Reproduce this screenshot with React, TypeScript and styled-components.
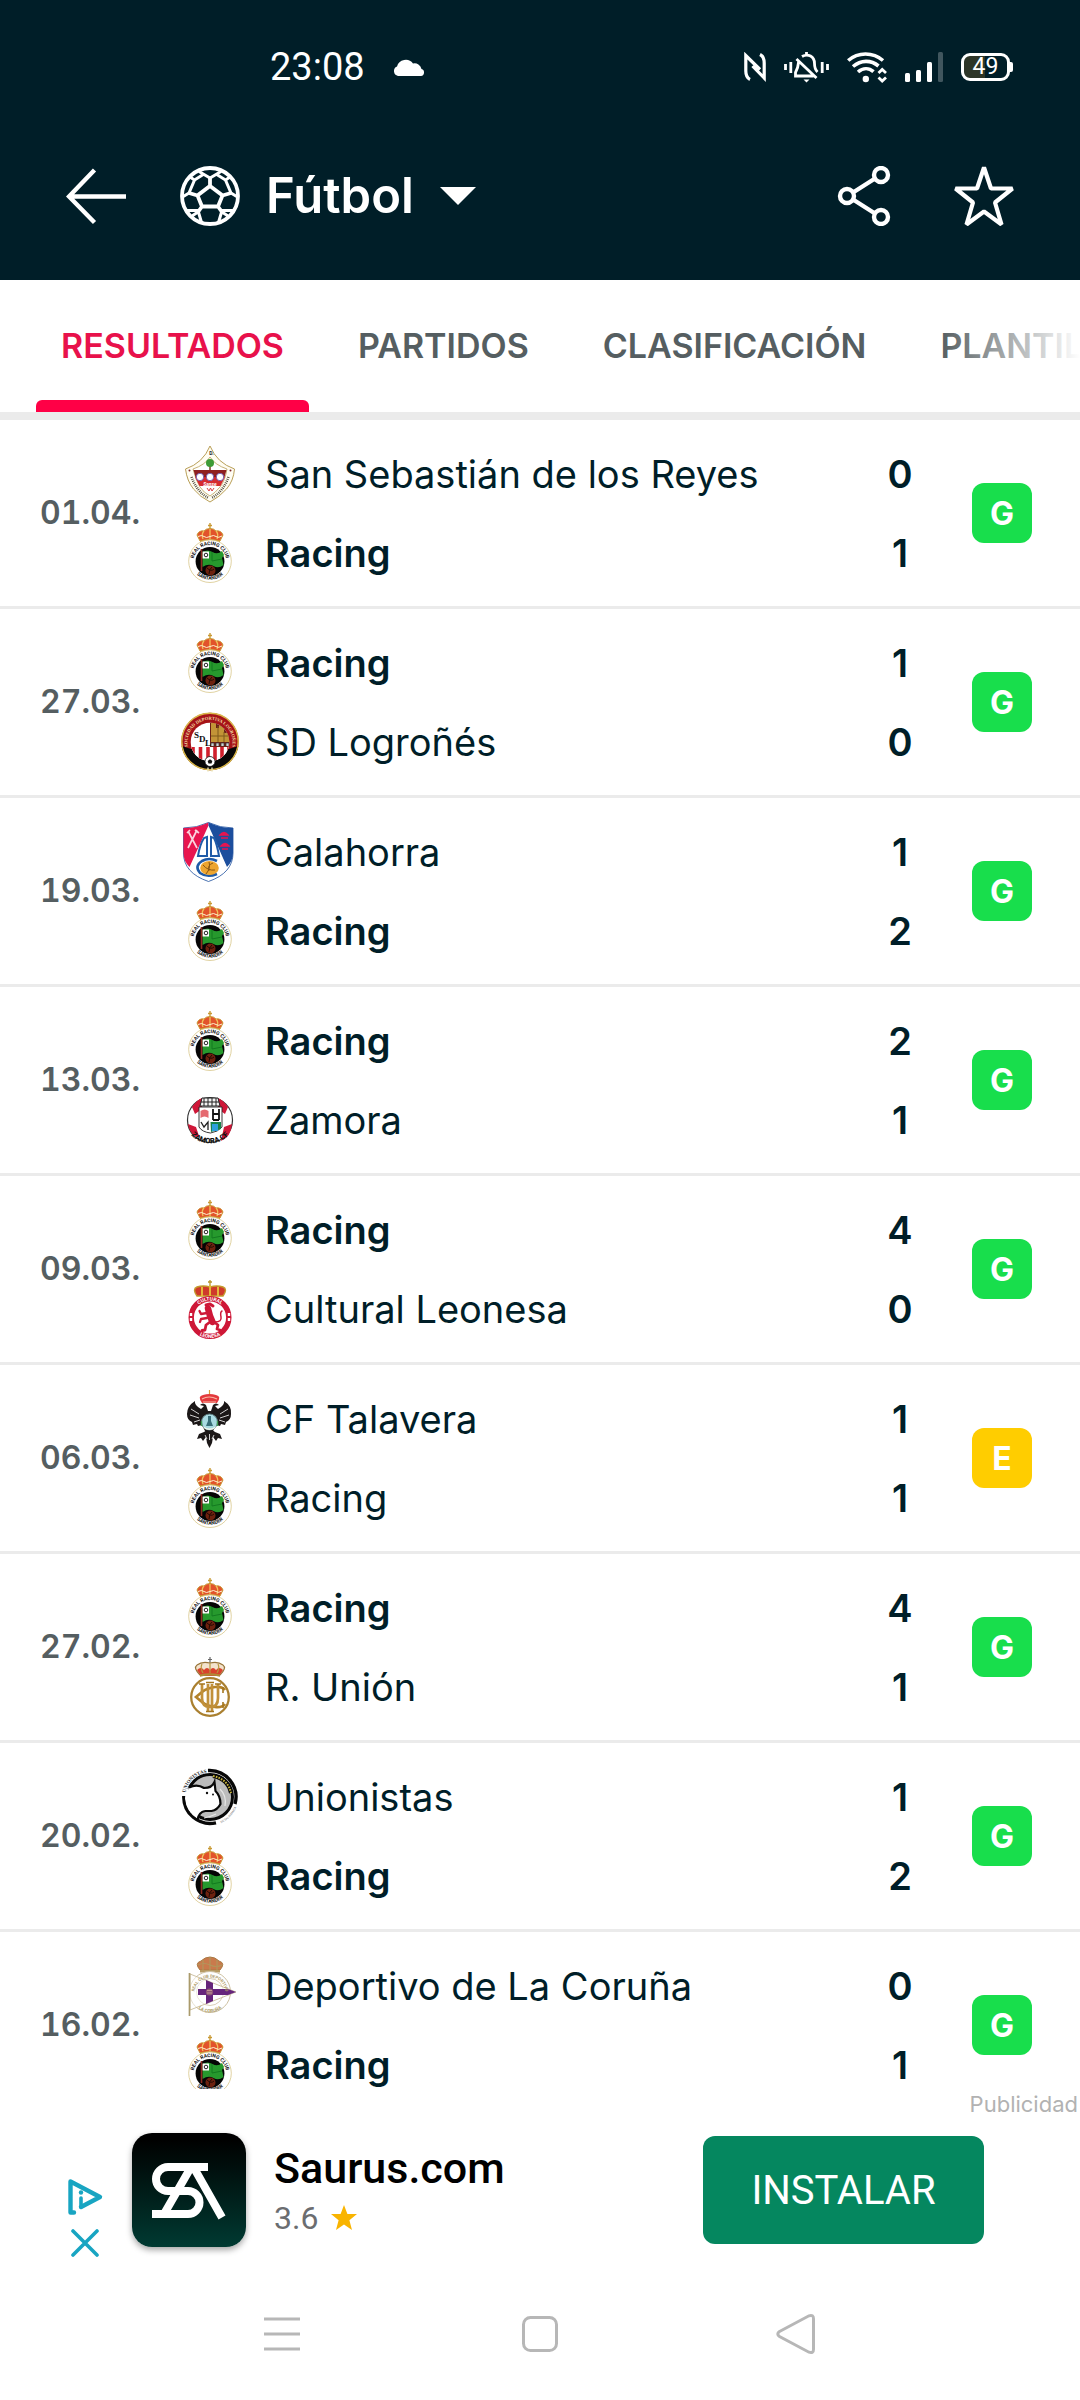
import React from "react";
import styled, { createGlobalStyle } from "styled-components";

const SANS = `Inter, Roboto, "Liberation Sans", sans-serif`;
const DEVICE = `Roboto, "Open Sans", "Liberation Sans", sans-serif`;

const GlobalStyle = createGlobalStyle`
  *, *::before, *::after { box-sizing: border-box; }
  body { margin: 0; background: #fff; color: #001e28; font-family: ${SANS}; }
  button, select { margin: 0; padding: 0; border: 0; background: none; color: inherit; font: inherit; }
  svg { display: block; flex: none; }
`;

const Page = styled.div`
  display: flex;
  flex-direction: column;
  height: 100vh;
  background: #fff;
`;

const Header = styled.header`
  flex: none;
  background: #001e28;
  color: #fff;
`;

const StatusBar = styled.div`
  display: flex;
  align-items: center;
  justify-content: space-between;
  height: 112px;
  padding: 22px 70px 0 270px;
  font-family: ${DEVICE};
`;

const StatusGroup = styled.div<{ $gap: number }>`
  display: flex;
  align-items: center;
  gap: ${(p) => p.$gap}px;
`;

const Clock = styled.time`
  font-size: 38px;
  line-height: 44px;
`;

const Battery = styled.div`
  position: relative;
  display: flex;
  align-items: center;
  justify-content: center;
  width: 49px;
  height: 28px;
  border: 3px solid #fff;
  border-radius: 9px;
  background: linear-gradient(to right, #2d3527 50%, transparent 50%);
  font-size: 23px;
  line-height: 22px;

  &::after {
    content: "";
    position: absolute;
    right: -6px;
    top: 6px;
    width: 3px;
    height: 10px;
    border-radius: 0 2px 2px 0;
    background: #fff;
  }
`;

const Toolbar = styled.div`
  display: flex;
  align-items: center;
  height: 168px;
  padding: 0 66px;
`;

const IconButton = styled.button`
  display: flex;
  align-items: center;
  justify-content: center;
  width: 60px;
  height: 60px;
`;

const SportPicker = styled.label`
  display: flex;
  align-items: center;
  gap: 26px;
  margin-left: 54px;
`;

const SportSelect = styled.select`
  appearance: none;
  outline: none;
  font-size: 49px;
  font-weight: 600;
  line-height: 60px;
`;

const Actions = styled.div`
  display: flex;
  gap: 60px;
  margin-left: auto;
`;

const Tabs = styled.nav`
  display: flex;
  flex: none;
  gap: 24px;
  height: 140px;
  padding: 0 36px;
  border-bottom: 8px solid #ebebeb;
  overflow: hidden;
`;

const TabStrip = styled.div`
  position: relative;
  flex: none;

  &::after {
    content: "";
    position: absolute;
    top: 0;
    right: 0;
    width: 140px;
    height: 132px;
    background: linear-gradient(to right, rgba(255, 255, 255, 0), #fff);
    pointer-events: none;
  }
`;

const Tab = styled.a<{ $active?: boolean }>`
  display: flex;
  flex: none;
  flex-direction: column;
  justify-content: space-between;
  padding: 46px 25px 0;
  color: ${(p) => (p.$active ? "#e8114b" : "#555e61")};
  font-size: 34px;
  font-weight: 600;
  line-height: 40px;
  text-decoration: none;

  &::after {
    content: "";
    height: 12px;
    margin: 0 -25px;
    border-radius: 6px 6px 0 0;
    background: ${(p) => (p.$active ? "#ff0046" : "transparent")};
  }
`;

const Results = styled.ul`
  flex: 1;
  min-height: 0;
  margin: 0;
  padding: 0;
  list-style: none;
  overflow: hidden;
`;

const Match = styled.li`
  display: grid;
  grid-template-columns: 140px 1fr 60px;
  align-items: center;
  height: 189px;
  padding: 0 48px 0 40px;
  border-bottom: 3px solid #ebebeb;
`;

const MatchDate = styled.time`
  color: #555e61;
  font-size: 32px;
  font-variant-numeric: tabular-nums;
  font-weight: 600;
  line-height: 40px;
`;

const Teams = styled.div`
  display: grid;
  gap: 19px;
`;

const Team = styled.div`
  display: grid;
  grid-template-columns: 60px 1fr 144px;
  align-items: center;
  height: 60px;
`;

const TeamName = styled.span<{ $winner: boolean }>`
  padding-left: 25px;
  font-size: 38px;
  font-weight: ${(p) => (p.$winner ? 600 : 400)};
  line-height: 48px;
  white-space: nowrap;
`;

const Score = styled.span`
  font-size: 38px;
  font-weight: 600;
  line-height: 48px;
  text-align: center;
`;

const Badge = styled.span<{ $draw: boolean }>`
  display: flex;
  align-items: center;
  justify-content: center;
  width: 60px;
  height: 60px;
  border-radius: 12px;
  background: ${(p) => (p.$draw ? "#ffcd00" : "#18de4c")};
  color: #fff;
  font-size: 32px;
  font-weight: 700;
`;

const AdArea = styled.aside`
  flex: none;
  height: 179px;
  background: #fff;
  font-family: ${DEVICE};
`;

const AdLabel = styled.p`
  margin: 0;
  padding: 2px 2px 0 0;
  color: #b2b2b2;
  font-family: ${SANS};
  font-size: 22px;
  line-height: 26px;
  text-align: right;
`;

const AdBanner = styled.div`
  display: flex;
  align-items: center;
  height: 130px;
  padding: 16px 96px 0 66px;
`;

const AdControls = styled.div`
  display: flex;
  flex-direction: column;
  align-items: center;
  align-self: flex-start;
  gap: 14px;
  width: 38px;
  margin-right: 28px;
  padding-top: 46px;
`;

const SmallButton = styled.button`
  display: flex;
`;

const AppIcon = styled.div`
  width: 114px;
  height: 114px;
  border-radius: 20px;
  background: linear-gradient(#000 5%, #001512 40%, #003a32);
  box-shadow: 0 3px 6px rgba(0, 0, 0, 0.35);
`;

const AppInfo = styled.div`
  margin-left: 28px;
  padding-top: 8px;
`;

const AppName = styled.div`
  color: #000;
  font-size: 43px;
  font-weight: 500;
  line-height: 48px;
`;

const Rating = styled.div`
  display: flex;
  align-items: center;
  gap: 12px;
  color: #6b6d70;
  font-size: 32px;
  line-height: 52px;
`;

const Install = styled.button`
  width: 281px;
  height: 108px;
  margin-left: auto;
  border-radius: 12px;
  background: #05875f;
  color: #fff;
  font-size: 40px;
`;

const NavBar = styled.nav`
  display: flex;
  flex: none;
  align-items: center;
  justify-content: center;
  gap: 197px;
  height: 132px;
  color: #b7b7b7;
`;

/* ---------- interface icons ---------- */

const CloudIcon = () => (
  <svg width="32" height="20" viewBox="0 0 32 20" fill="#fff">
    <path d="M5 19a5 5 0 0 1-1-9.500A9 9 0 0 1 20 6.500a7 7 0 0 1 8.500 5.500A3.600 3.600 0 0 1 28 19Z" />
  </svg>
);

const NfcIcon = () => (
  <svg width="22" height="30" viewBox="0 0 22 30" fill="none" stroke="#fff" strokeWidth="3.200">
    <path d="M6 27.500C3 26 1.800 23 1.800 19V3.500L16 17.500M16 2.500c3 1.500 4.200 4.500 4.200 8.500v15L8.500 14" />
  </svg>
);

const MutedBellIcon = () => (
  <svg width="45" height="32" viewBox="0 0 45 32" fill="none" stroke="#fff" strokeWidth="2.800">
    <path d="M1.500 13v6M6.800 11v11M38.200 11v11M43.500 13v6" />
    <path d="M22.500 1v3M18 5.500c6-3.500 12.500 0 12.500 7 0 4 1 6.500 3 8.500M14.800 10c-.6 6-1.300 8-3.300 11.500V25h18M12.500 8l20 19" />
    <path d="M19.500 28.500h6l-3 3Z" fill="#fff" stroke="none" />
  </svg>
);

const WifiIcon = () => (
  <svg width="40" height="32" viewBox="0 0 40 32" fill="none" stroke="#fff" strokeWidth="3.600">
    <path d="M1.200 9.500C11 .8 26 .8 36 9.500M6 15.500c8-6.800 18-6.800 25.500-.5M11 21c5-4.300 11-4.300 15.500-.3" />
    <circle cx="18.800" cy="28" r="3.200" fill="#fff" stroke="none" />
    <path d="m31.500 22 3.700-3.500L39 22M31.500 26.500l3.700 3.500 3.800-3.500" strokeWidth="2.800" />
  </svg>
);

const SignalIcon = () => (
  <svg width="38" height="30" viewBox="0 0 38 30" fill="#fff">
    <rect y="21" width="5" height="9" rx="1.500" />
    <rect x="11" y="18" width="5" height="12" rx="1.500" />
    <rect x="22" y="10" width="5" height="20" rx="1.500" />
    <rect x="33" width="5" height="30" rx="1.500" opacity=".25" />
  </svg>
);

const BackIcon = () => (
  <svg width="60" height="60" viewBox="0 0 60 60" fill="none" stroke="#fff" strokeWidth="4.400">
    <path d="M28.500 4 3 30.500 28.500 56.500M3 30.500h57" />
  </svg>
);

const BallIcon = () => (
  <svg width="60" height="60" viewBox="0 0 60 60" fill="none" stroke="#fff" strokeWidth="3.800">
    <circle cx="30" cy="30" r="28" />
    <path d="m30 20 12.500 9.500L38 40.500H22L17.500 29.500ZM30 20v-9M42.500 29.500 51 27M38 40.500l4 5.500M22 40.500 18 46M17.500 29.500 9 27" />
    <path d="M19 5.500 30 12l11-6.500M9 27l5.500-13L10 11M9 27l-6.500 4M51 27l-5.500-13 4.500-3M51 27l6.500 4M14.500 14 24 8M45.500 14 36 8M7 44.500h11l3.500 12M18 46l-6 4M53 44.500H42l-3.500 12M42 46l6 4" strokeWidth="3" />
  </svg>
);

const CaretIcon = () => (
  <svg width="36" height="18" viewBox="0 0 36 18" fill="#fff">
    <path d="M0 0h36L18 18Z" />
  </svg>
);

const ShareIcon = () => (
  <svg width="60" height="60" viewBox="0 0 60 60" fill="none" stroke="#fff" strokeWidth="4.400">
    <circle cx="13" cy="30" r="7" />
    <circle cx="47" cy="9" r="7" />
    <circle cx="47" cy="51" r="7" />
    <path d="m19 26.500 22-14M19 33.500l22 14" />
  </svg>
);

const StarIcon = () => (
  <svg width="60" height="60" viewBox="0 0 60 60" fill="none" stroke="#fff" strokeWidth="4.200" strokeLinejoin="bevel">
    <path d="m30 1.500 7 21h21.500L41 36.500l6.500 22L30 45.500l-17.500 13 6.500-22L1.500 22.500H23Z" />
  </svg>
);

const AdChoicesIcon = () => (
  <svg width="36" height="36" viewBox="0 0 36 36" fill="none" stroke="#18a5c2" strokeWidth="4.400" strokeLinecap="round" strokeLinejoin="round">
    <path d="M7 33.500H3.500V2.500L33 18 14 28" />
    <path d="M14 19v9" strokeWidth="3.600" />
    <circle cx="14" cy="13.500" r="2.200" fill="#18a5c2" stroke="none" />
  </svg>
);

const CloseIcon = () => (
  <svg width="28" height="28" viewBox="0 0 28 28" stroke="#18a5c2" strokeWidth="3.600" strokeLinecap="round">
    <path d="m2 2 24 24M26 2 2 26" />
  </svg>
);

const AppLogo = () => (
  <svg width="114" height="114" viewBox="0 0 114 114" fill="none" stroke="#fff" strokeWidth="8">
    <path d="M76 34H36a12 12 0 0 0 0 24h20a11.500 11.500 0 0 1 0 23H20" />
    <path d="M58.500 35 32 81M62 35l28 49.500" />
  </svg>
);

const RatingStar = () => (
  <svg width="28" height="28" viewBox="0 0 28 28" fill="#f9b400">
    <path d="m14 1 3.400 9H27l-7.600 6.200L22 26l-8-5.600L6 26l2.600-9.800L1 10h9.600Z" />
  </svg>
);

const MenuIcon = () => (
  <svg width="60" height="60" viewBox="0 0 60 60" stroke="currentColor" strokeWidth="3">
    <path d="M11 15h36M11 30h36M11 45h36" />
  </svg>
);

const HomeIcon = () => (
  <svg width="60" height="60" viewBox="0 0 60 60" fill="none" stroke="currentColor" strokeWidth="3">
    <rect x="13.500" y="13.500" width="33" height="33" rx="7" />
  </svg>
);

const NavBackIcon = () => (
  <svg width="60" height="60" viewBox="0 0 60 60" fill="none" stroke="currentColor" strokeWidth="3">
    <path d="M12.500 27.500 42 11.800q4.500-1.500 4.500 3v30.400q0 4.500-4.500 3L12.500 32.500q-3.500-2.500 0-5Z" />
  </svg>
);

/* ---------- club crests, each on a 60 by 60 grid ---------- */

const Crest = ({ children }: { children: React.ReactNode }) => (
  <svg width="60" height="60" viewBox="0 0 60 60" fontFamily="Roboto, sans-serif" aria-hidden="true">
    {children}
  </svg>
);

const Crown = ({ fill = "#e2532b", trim = "#c99a35" }: { fill?: string; trim?: string }) => (
  <g>
    <path d="M30 0v6M28 2.500h4" stroke={trim} strokeWidth="1.400" />
    <path d="M20 18 17 12q2-5 7-4 2-2.500 6-2.500T36 8q5-1 7 4l-3 6Z" fill={fill} stroke={trim} strokeWidth="1" />
    <path d="M24 8q-3 3-1 8M36 8q3 3 1 8M30 6v10" fill="none" stroke="#f0c25a" strokeWidth="1.300" />
    <path d="M18 13.500q4-2 6 0t6 0q4-2 6 0t6-.5" fill="none" stroke="#fff1cf" strokeWidth="1" />
    <path d="M20 17.500q10-3 20 0v2q-10-2.500-20 0Z" fill={trim} />
  </g>
);

const RacingCrest = () => (
  <Crest>
    <Crown />
    <circle cx="30" cy="38.200" r="21.300" fill="#fff" stroke="#d8c68a" strokeWidth=".8" />
    <circle cx="30" cy="38.500" r="14.400" fill="#050505" />
    <path d="M22.500 29q5-3 10 0t9.500-1l2 4-2 3 1.500 7q-5 4-10 1t-11 1Z" fill="#26992d" />
    <path d="M32 29v9l10-2" fill="none" stroke="#137a20" strokeWidth="1" />
    <path d="M22.500 28.500h6.500v7h-6.500Z" fill="#fff" />
    <circle cx="26" cy="32" r="1.800" fill="none" stroke="#222" strokeWidth="1" />
    <path d="M21.500 26v22" stroke="#8e2c22" strokeWidth="1.600" />
    <circle cx="30.500" cy="47.500" r="5" fill="#6d220f" />
    <path d="M27 45q4 4 7 1M29 51q0-5 3-7" fill="none" stroke="#210a04" strokeWidth="1" />
    <path id="racing-top" d="M14.400 43.500A16.400 16.400 0 1 1 45.600 43.500" fill="none" />
    <path id="racing-bottom" d="M11.500 43A19.300 19.300 0 0 0 48.500 43" fill="none" />
    <text fontSize="5" fontWeight="700" textAnchor="middle" fill="#111">
      <textPath href="#racing-top" startOffset="50%">REAL RACING CLUB</textPath>
    </text>
    <text fontSize="5" fontWeight="700" textAnchor="middle" fill="#111">
      <textPath href="#racing-bottom" startOffset="50%">SANTANDER</textPath>
    </text>
  </Crest>
);

const SanSebastianCrest = () => (
  <Crest>
    <path d="M30 2q7 17 24.500 23-1 12-8 20T30 58Q20 53 13.500 45t-8-20Q23 19 30 2Z" fill="#fffdf3" stroke="#b99f58" strokeWidth="1" />
    <path d="M30 13q5 8 17 12-2 12-7 18t-10 9q-6-3-10-9t-7-18q12-4 17-12Z" fill="#fff" stroke="#b99f58" strokeWidth=".8" />
    <path d="M30 19v8" stroke="#7c4a2b" strokeWidth="1.600" />
    <circle cx="30" cy="19" r="4" fill="#3d9b35" />
    <path d="M13.500 26h33l-2 7H15.500Z" fill="#8e1f1f" />
    <path d="M15 33h30l-4.500 9h-21Z" fill="#d52b30" />
    <circle cx="20" cy="33" r="3.700" fill="#fff" stroke="#4e3fae" strokeWidth=".7" />
    <circle cx="30" cy="33" r="3.700" fill="#fff" stroke="#4e3fae" strokeWidth=".7" />
    <circle cx="40" cy="33" r="3.700" fill="#fff" stroke="#4e3fae" strokeWidth=".7" />
    <text x="30" y="41.500" fontSize="5" fontWeight="700" fontStyle="italic" textAnchor="middle" fill="#fff">Sanse</text>
    <path d="m27 44 2 3 1.500-3 1.500 3 2-3" fill="none" stroke="#d52b30" strokeWidth=".9" />
    <text x="31.500" y="10.500" fontSize="5" fontWeight="700" textAnchor="middle" fill="#222">D.</text>
    <circle cx="9.500" cy="26.500" r="1" fill="#7d2525" />
    <circle cx="50.500" cy="26.500" r="1" fill="#7d2525" />
    <path d="M11.500 33Q17 48 28.500 54M48.500 33Q43 48 31.500 54" fill="none" stroke="#514c3c" strokeWidth="2.600" strokeDasharray=".9 1.100" />
  </Crest>
);

const LogronesCrest = () => (
  <Crest>
    <circle cx="30" cy="29.500" r="28.700" fill="#a51318" />
    <path d="M1.700 34A28.700 28.700 0 0 0 58.300 34L46 38H14Z" fill="#080808" />
    <circle cx="30" cy="29.500" r="28.200" fill="none" stroke="#d9b84a" strokeWidth="1.400" />
    <clipPath id="logrones-inner"><circle cx="30" cy="30" r="19.300" /></clipPath>
    <g clipPath="url(#logrones-inner)">
      <path d="M10 10h40v40H10Z" fill="#fff" />
      <path d="M30 10h21v25H30Z" fill="#6b1f16" />
      <path d="M31 11h5v5h3v-4h5v9h6v9H31Z" fill="#c39437" />
      <path d="M31 24h19M38 14v16M44 20v10" stroke="#7e5a1c" strokeWidth="1" />
      <path d="M31 34v-3h3v3m2 0v-3h3v3m2 0v-3h3v3m2 0v-3h3v3" fill="#cfd3d5" stroke="#333" strokeWidth=".7" />
      <path d="M10 35h40v16H10Z" fill="#fff" />
      <path d="M13 35v16M20.500 35v16M28 35v16M35 35v16M42 35v16M49 35v16" stroke="#d01f2c" strokeWidth="3.600" />
    </g>
    <text fontFamily="Liberation Serif, serif" fontSize="9" fontWeight="700" fill="#111" x="14 19 25" y="26 30 34">SDL</text>
    <circle cx="30" cy="49.500" r="5" fill="#fff" stroke="#111" strokeWidth=".8" />
    <path d="m30 47.300 2.300 1.700-.8 2.600h-3l-.8-2.600Z" fill="#111" />
    <path d="M28 55.500v4M32 55.500v4" stroke="#e8dfb0" strokeWidth="1.400" />
    <path id="logrones-arc" d="M8.500 37A22.500 22.500 0 1 1 51.500 37" fill="none" />
    <text fontFamily="Liberation Serif, serif" fontSize="4.600" fontWeight="700" textAnchor="middle" fill="#f3dca4">
      <textPath href="#logrones-arc" startOffset="50%">SOCIEDAD DEPORTIVA LOGROÑES</textPath>
    </text>
  </Crest>
);

const CalahorraCrest = () => (
  <Crest>
    <path d="M3.500 6Q17 6 28.500.5 40 6 53 6V31q0 20-24.500 28.500Q3.500 51 3.500 31Z" fill="#fff" stroke="#1c4e9d" strokeWidth=".8" />
    <path d="M3.500 6Q17 6 28.500.5v3L9.500 45q-6-6-6-14Z" fill="#e8154f" />
    <path d="M53 6Q40 6 28.500.5v3L47 45q6-6 6-14Z" fill="#1c4e9d" />
    <path d="m8 9 9 17M17 8 8 26M7 11l3-3M15 8l4 3" stroke="#fbd5df" strokeWidth="1.700" />
    <path d="M40 13q4-5 8 0ZM41 16h7M41 24q4-5 8 0ZM42 27h6" fill="#e8154f" stroke="#e8154f" strokeWidth="1.400" />
    <path d="M27 15v19H18q2-12 6-18ZM31 15v19h8q-2-12-5-18Z" fill="none" stroke="#1f5ba8" strokeWidth="2" />
    <path d="M37 39q-8-4-15 0-8 5-2 12 7 5 17 1" fill="none" stroke="#1f5ba8" strokeWidth="2.600" />
    <ellipse cx="29.500" cy="46" rx="9.300" ry="7" fill="#eda52f" />
    <path d="M23 43q5 6 12 5M29 40q2 6-3 12M33 41q-6 2-4 8" fill="none" stroke="#8b5712" strokeWidth="1" />
  </Crest>
);

const ZamoraCrest = () => (
  <Crest>
    <circle cx="30" cy="30" r="22.500" fill="#fff" stroke="#333" strokeWidth="1.200" />
    <path d="M12 17q5-7 10-9v11l-7 5ZM48 17q-5-7-10-9v11l7 5ZM8 34l8 3 3 9-3 1q-7-5-8-13ZM52 34l-8 3-3 14q10-4 11-17Z" fill="#cf1738" />
    <path d="M22 8h16l2 8H20Z" fill="#f3f3f3" stroke="#222" strokeWidth="1" />
    <path d="M24 8v8M28 8v8M32 8v8M36 8v8M21 12h18" stroke="#222" strokeWidth="1" />
    <path d="M19 17h23v20q-4 5-11.500 6Q22 42 19 37Z" fill="#fff" stroke="#222" strokeWidth=".9" />
    <path d="M20.500 21q4-3 8 0v7q-4-3-8 0Z" fill="#e56a70" />
    <path d="M33 19v11M39 19v11M33 24h6M33 30h6" stroke="#111" strokeWidth="1.800" />
    <path d="M30.500 32H41v7l-10 3Z" fill="#17834b" />
    <path d="M32 34h6v7h-6Z" fill="#2da0dc" />
    <path d="m21 32 3 5 4-5v8" fill="none" stroke="#222" strokeWidth="1.300" />
    <path id="zamora-arc" d="M9 42A25 25 0 0 0 51 42" fill="none" />
    <text fontSize="7.500" fontWeight="900" textAnchor="middle" fill="#111">
      <textPath href="#zamora-arc" startOffset="50%">ZAMORA CF</textPath>
    </text>
  </Crest>
);

const CulturalCrest = () => (
  <Crest>
    <path d="M30 1v5M28 3h4" stroke="#b8942c" strokeWidth="1.300" />
    <path d="M17 17q-5-7 0-9 6-2 13 0 7-2 13 0 5 2 0 9Z" fill="#cf3a2b" stroke="#c49a2d" strokeWidth="1.400" />
    <path d="M22 8v9M38 8v9M30 6v11" stroke="#e5b83c" strokeWidth="2" />
    <circle cx="30" cy="38.500" r="18.800" fill="#fff" stroke="#ce1737" strokeWidth="5.400" />
    <g fill="none" stroke="#ce1737" strokeLinecap="round" strokeLinejoin="round">
      <path d="M28 29.500 30 37l2.500 6" strokeWidth="6.500" />
      <path d="m26 26 4-1 3 2" strokeWidth="3" />
      <path d="m27 34-6 1-1.500-3M27 39l-6 1-1 3" strokeWidth="2.300" />
      <path d="m30 43-4 3-1 5-3 .5M34 43l4 3-1 4 3 1" strokeWidth="2.800" />
      <path d="M35 43q7 0 6-5t1-6" strokeWidth="1.500" />
    </g>
    <path id="cultural-top" d="M13 38.500a17 17 0 0 1 34 0" fill="none" />
    <path id="cultural-bottom" d="M9.500 38.500a20.500 20.500 0 0 0 41 0" fill="none" />
    <text fontSize="5" fontWeight="700" textAnchor="middle" fill="#fff">
      <textPath href="#cultural-top" startOffset="50%">CULTURAL</textPath>
    </text>
    <text fontSize="5" fontWeight="700" textAnchor="middle" fill="#fff">
      <textPath href="#cultural-bottom" startOffset="50%">LEONESA</textPath>
    </text>
    <path d="M11 34v3M11 39v3M49 34v3M49 39v3" stroke="#fff" strokeWidth="2.400" />
  </Crest>
);

const TalaveraCrest = () => (
  <Crest>
    <path d="M29.500 1v4" stroke="#d8a03a" strokeWidth="1.200" />
    <path d="M22 14q-5-7 1-8 3-1 6.500-1T36 6q6 1 1 8Z" fill="#e33a3d" />
    <path d="M22 10q7-4 15 0M23 13h13" fill="none" stroke="#f8b8a4" strokeWidth="1.200" />
    <path d="M15 12q-1 4 6 8l3-3-4-1q3-3 6 0l2 6h3l2-6q3-3 6 0l-4 1 3 3q7-4 6-8 8 5 7 13 0 6-5 8l-1 3-4-1-1 2-4-1-3 6-4 2-4-2-3-6-4 1-1-2-4 1-1-3q-5-2-5-8 0-8 8-13Z" fill="#1b1717" />
    <path d="m11 20 8 5M10 26l9 3M48 20l-8 5M49 26l-9 3M14 33l6-2M45 33l-6-2" stroke="#fff" strokeWidth=".8" />
    <path d="M24 43l-5 2-2 5 4-1 2 3 3-4 1 6 2.500 5 2.500-5 1-6 3 4 2-3 4 1-2-5-5-2-5-4Z" fill="#1b1717" />
    <path d="m25 46 2 4M34 46l-2 4M29.500 45v6" stroke="#fff" strokeWidth=".8" />
    <circle cx="29.500" cy="33" r="8" fill="#a9dbe2" stroke="#5c7c80" strokeWidth="1" />
    <path d="M28 27h3v5l2 5h-7l2-5Z" fill="#386e78" />
    <path d="M23 37q6.500 5 13 0-1 4-6.500 4T23 37Z" fill="#eef5ec" />
    <path d="M21.500 32v5M37.500 32v5" stroke="#3f9c55" strokeWidth="1.400" />
  </Crest>
);

const UnionCrest = () => (
  <Crest>
    <path d="M30 0v6M28 2.500h4" stroke="#666" strokeWidth="1.200" />
    <path d="M20 18q-7-7-3-10 5-4 13-2 8-2 13 2 4 3-3 10Z" fill="#f3e3cd" stroke="#98753a" strokeWidth="1.100" />
    <path d="M17 13q4-4 7 0 3-4 6 0 3-4 6 0 3-4 7 0l-4 6H21Z" fill="#d8432c" />
    <path d="M22 7q-2 4 1 9M38 7q2 4-1 9M30 6v10" fill="none" stroke="#b9953f" strokeWidth="1.200" />
    <path d="M20 17.500q10-2.500 20 0v2.300q-10-2.500-20 0Z" fill="#b08a35" />
    <circle cx="30" cy="40" r="18.800" fill="#fff" stroke="#aa8030" strokeWidth="2.300" />
    <path d="M45 33q-3-4-10-3-8 1-13 5l-6 5 6 5q5 4 13 5 7 1 10-3" fill="none" stroke="#b4832b" strokeWidth="2.700" />
    <path d="M22 27v14q0 9 8 9t8-9V27M28 27v27M32 27v27" fill="none" stroke="#c1903a" strokeWidth="2.700" />
    <path d="M19 27h6M35 27h6M26 25.500h8M26 54.500h8M43 30v6M43 45v6" stroke="#a4761f" strokeWidth="1.600" />
  </Crest>
);

const UnionistasCrest = () => (
  <Crest>
    <path d="M28 3.500A26.500 26.500 0 0 1 55 37" fill="none" stroke="#080808" strokeWidth="3.400" />
    <path d="M3.800 29A26.500 26.500 0 0 0 36 55.800" fill="none" stroke="#080808" strokeWidth="3.400" />
    <circle cx="30" cy="30" r="22.500" fill="#bcbcbc" stroke="#080808" strokeWidth="3" />
    <path d="M9 21q8-4 16 0 7-1 9-6l2 8 4 11-1 6-6 4-9-1q-6 2-6 9-12-7-13-21Z" fill="#fff" />
    <path d="M5.500 27q1-5 3-7l.5 14 6 11-4 1q-6-9-5.500-19Z" fill="#fff" />
    <path d="M9 20.500q8-4 15 .5 8 0 10.500-6l1 9q5 5 5 13-3 6-9 7h-6q-7 1-8 9" fill="none" stroke="#080808" strokeWidth="2.200" />
    <circle cx="27" cy="26" r="1.200" fill="#111" />
    <circle cx="33" cy="27.500" r="1" fill="#111" />
    <path d="M33 9q15 3 18 17" fill="none" stroke="#080808" strokeWidth="4" />
    <path d="M33 9q15 3 18 17" fill="none" stroke="#c9b53a" strokeWidth="2" strokeDasharray="1.600 1.200" />
    <path d="M40 22q7 7 5 17M24 51q6-1 12-4" fill="none" stroke="#e6e6e6" strokeWidth="1.200" />
    <path id="unionistas-arc" d="M5 28A25 25 0 0 1 29 5.500" fill="none" />
    <path id="unionistas-foot" d="M37 58Q53 52 58 36" fill="none" />
    <text fontFamily="Liberation Serif, serif" fontSize="5" fontWeight="700" textAnchor="middle" fill="#222">
      <textPath href="#unionistas-arc" startOffset="50%">UNIONISTAS</textPath>
    </text>
    <text fontSize="3" textAnchor="middle" fill="#777">
      <textPath href="#unionistas-foot" startOffset="50%">DE SALAMANCA</textPath>
    </text>
  </Crest>
);

const DeportivoCrest = () => (
  <Crest>
    <path d="M20 14q-6-7 1-9 4-4 9-4t9 4q7 2 1 9Z" fill="#c97a4c" stroke="#a97a45" strokeWidth="1" />
    <path d="M18 9q6-3 12 0t12 0M23 4v10M37 4v10M30 1v13" fill="none" stroke="#b1965c" strokeWidth="1.200" />
    <path d="M20 14h20v2.500H20Z" fill="#b79a63" />
    <circle cx="30" cy="36" r="20.500" fill="#fff" stroke="#cfc2a3" strokeWidth="1" />
    <circle cx="30" cy="36" r="13.500" fill="#fff" stroke="#cfc2a3" strokeWidth=".8" />
    <path d="m10 18 46 18L10 54Z" fill="#fff" fillOpacity=".5" stroke="#c9bb98" strokeWidth=".9" />
    <path d="M9.500 17v43" stroke="#aa9a6b" strokeWidth="1.700" />
    <path d="M18 33h8v-9l7 3v6h15l8 3-8 3H33v6l-7 3v-9h-8Z" fill="#66257c" />
    <circle cx="29.500" cy="36" r="3.600" fill="#8f5b77" />
    <path d="M27 34.500h5M27 37h5" stroke="#d0a5a0" strokeWidth=".8" />
    <path id="depor-top" d="M14.700 39.500a15.500 15.500 0 1 1 30.600 0" fill="none" />
    <path id="depor-bottom" d="M11.500 38a18.500 18.500 0 0 0 37 0" fill="none" />
    <text fontSize="4.200" fontWeight="700" textAnchor="middle" fill="#ae9b68">
      <textPath href="#depor-top" startOffset="50%">REAL CLUB DEPORTIVO</textPath>
    </text>
    <text fontSize="4.600" fontWeight="700" textAnchor="middle" fill="#ae9b68">
      <textPath href="#depor-bottom" startOffset="50%">LA CORUÑA</textPath>
    </text>
  </Crest>
);

/* ---------- data ---------- */

type Side = { name: string; score: number; crest: React.ComponentType };
type Fixture = { date: string; home: Side; away: Side };

const racing = (score: number): Side => ({ name: "Racing", score, crest: RacingCrest });

const fixtures: Fixture[] = [
  { date: "01.04.", home: { name: "San Sebastián de los Reyes", score: 0, crest: SanSebastianCrest }, away: racing(1) },
  { date: "27.03.", home: racing(1), away: { name: "SD Logroñés", score: 0, crest: LogronesCrest } },
  { date: "19.03.", home: { name: "Calahorra", score: 1, crest: CalahorraCrest }, away: racing(2) },
  { date: "13.03.", home: racing(2), away: { name: "Zamora", score: 1, crest: ZamoraCrest } },
  { date: "09.03.", home: racing(4), away: { name: "Cultural Leonesa", score: 0, crest: CulturalCrest } },
  { date: "06.03.", home: { name: "CF Talavera", score: 1, crest: TalaveraCrest }, away: racing(1) },
  { date: "27.02.", home: racing(4), away: { name: "R. Unión", score: 1, crest: UnionCrest } },
  { date: "20.02.", home: { name: "Unionistas", score: 1, crest: UnionistasCrest }, away: racing(2) },
  { date: "16.02.", home: { name: "Deportivo de La Coruña", score: 0, crest: DeportivoCrest }, away: racing(1) },
];

const TeamLine = ({ side, winner }: { side: Side; winner: boolean }) => {
  const Shield = side.crest;
  return (
    <Team>
      <Shield />
      <TeamName $winner={winner}>{side.name}</TeamName>
      <Score>{side.score}</Score>
    </Team>
  );
};

const MatchRow = ({ date, home, away }: Fixture) => {
  const draw = home.score === away.score;
  return (
    <Match>
      <MatchDate>{date}</MatchDate>
      <Teams>
        <TeamLine side={home} winner={home.score > away.score} />
        <TeamLine side={away} winner={away.score > home.score} />
      </Teams>
      <Badge $draw={draw}>{draw ? "E" : "G"}</Badge>
    </Match>
  );
};

export default function App() {
  return (
    <Page>
      <GlobalStyle />
      <Header>
        <StatusBar>
          <StatusGroup $gap={28}>
            <Clock>23:08</Clock>
            <CloudIcon />
          </StatusGroup>
          <StatusGroup $gap={18}>
            <NfcIcon />
            <MutedBellIcon />
            <WifiIcon />
            <SignalIcon />
            <Battery>49</Battery>
          </StatusGroup>
        </StatusBar>
        <Toolbar>
          <IconButton aria-label="Atrás">
            <BackIcon />
          </IconButton>
          <SportPicker>
            <BallIcon />
            <SportSelect aria-label="Deporte" defaultValue="futbol">
              <option value="futbol">Fútbol</option>
            </SportSelect>
            <CaretIcon />
          </SportPicker>
          <Actions>
            <IconButton aria-label="Compartir">
              <ShareIcon />
            </IconButton>
            <IconButton aria-label="Favorito">
              <StarIcon />
            </IconButton>
          </Actions>
        </Toolbar>
      </Header>
      <TabStrip>
        <Tabs>
          <Tab href="#resultados" $active aria-current="page">RESULTADOS</Tab>
          <Tab href="#partidos">PARTIDOS</Tab>
          <Tab href="#clasificacion">CLASIFICACIÓN</Tab>
          <Tab href="#plantilla">PLANTILLA</Tab>
        </Tabs>
      </TabStrip>
      <Results>
        {fixtures.map((fixture) => (
          <MatchRow key={fixture.date} {...fixture} />
        ))}
      </Results>
      <AdArea>
        <AdLabel>Publicidad</AdLabel>
        <AdBanner>
          <AdControls>
            <SmallButton aria-label="Opciones de anuncios">
              <AdChoicesIcon />
            </SmallButton>
            <SmallButton aria-label="Cerrar anuncio">
              <CloseIcon />
            </SmallButton>
          </AdControls>
          <AppIcon>
            <AppLogo />
          </AppIcon>
          <AppInfo>
            <AppName>Saurus.com</AppName>
            <Rating>
              3.6
              <RatingStar />
            </Rating>
          </AppInfo>
          <Install>INSTALAR</Install>
        </AdBanner>
      </AdArea>
      <NavBar>
        <IconButton aria-label="Recientes">
          <MenuIcon />
        </IconButton>
        <IconButton aria-label="Inicio">
          <HomeIcon />
        </IconButton>
        <IconButton aria-label="Volver">
          <NavBackIcon />
        </IconButton>
      </NavBar>
    </Page>
  );
}
